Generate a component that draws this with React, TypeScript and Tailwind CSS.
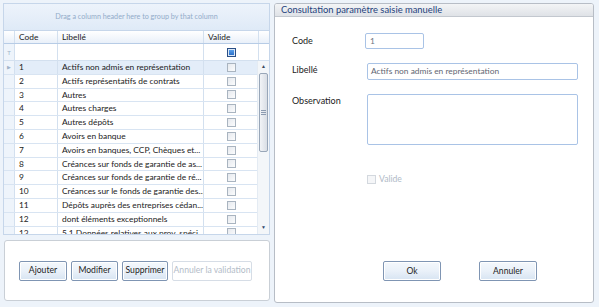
import React from 'react'

const rows = [
    ['1', 'Actifs non admis en représentation'],
    ['2', 'Actifs représentatifs de contrats'],
    ['3', 'Autres'],
    ['4', 'Autres charges'],
    ['5', 'Autres dépôts'],
    ['6', 'Avoirs en banque'],
    ['7', 'Avoirs en banques, CCP, Chèques et...'],
    ['8', 'Créances sur fonds de garantie de as...'],
    ['9', 'Créances sur fonds de garantie de ré...'],
    ['10', 'Créances sur le fonds de garantie des...'],
    ['11', 'Dépôts auprès des entreprises cédan...'],
    ['12', 'dont éléments exceptionnels'],
    ['13', '5.1 Données relatives aux prov. spéci...'],
]

function GridCheck() {
    return (
        <span className="block w-[9px] h-[9px] border border-[#a9b4c0] bg-gradient-to-br from-[#e6e9ee] to-[#fbfcfd]" />
    )
}

function Btn({ label, w, disabled = false }: { label: string; w: string; disabled?: boolean }) {
    return (
        <button
            className={`${w} h-[20px] rounded-[2px] border text-[8.6px] leading-none whitespace-nowrap ${disabled
                ? 'border-[#d6dde6] bg-white text-[#b3bcc8]'
                : 'border-[#7f95b3] bg-gradient-to-b from-[#f4f8fc] via-[#eaf1f9] to-[#d7e4f2] text-[#1d1d1d] shadow-[inset_0_0_0_1px_#ffffff]'
                }`}
        >
            {label}
        </button>
    )
}

export default function App() {
    return (
        <div
            className="w-[599px] h-[307px] flex gap-[4px] p-[3px] bg-[#edf3fa] text-[8.4px] text-[#1b1b1b]"
            style={{ fontFamily: 'Lato, "Open Sans", sans-serif' }}
        >
            <div className="w-[267px] flex flex-col gap-[5px]">
                {/* grid */}
                <div className="h-[232px] flex flex-col border border-[#c6d6ea] bg-white overflow-hidden">
                    <div className="h-[27px] shrink-0 flex items-center justify-center bg-gradient-to-b from-[#edf3fb] to-[#dfeaf7] border-b border-[#c6d6ea] text-[7.2px] text-[#93acc9]">
                        Drag a column header here to group by that column
                    </div>
                    <div className="h-[13px] shrink-0 flex bg-gradient-to-b from-white to-[#e9f0f9] border-b border-[#b7cce6]">
                        <div className="w-[11px] border-r border-[#d3e0ef]" />
                        <div className="w-[43px] border-r border-[#d3e0ef] pl-[4px] flex items-center">Code</div>
                        <div className="w-[146px] border-r border-[#d3e0ef] pl-[4px] flex items-center">Libellé</div>
                        <div className="w-[55px] border-r border-[#d3e0ef] pl-[4px] flex items-center">Valide</div>
                        <div className="flex-1" />
                    </div>
                    <div className="h-[17px] shrink-0 flex border-b border-[#d3e0ef]">
                        <div className="w-[11px] border-r border-[#d3e0ef] bg-[#eef4fb] flex items-center justify-center text-[6px] text-[#9fb2c8]">
                            T
                        </div>
                        <div className="w-[43px] border-r border-[#d3e0ef]" />
                        <div className="w-[146px] border-r border-[#d3e0ef]" />
                        <div className="w-[55px] border-r border-[#d3e0ef] flex items-center justify-center">
                            <span className="block w-[9px] h-[9px] border border-[#2a4f86] bg-[#dbe8f7] p-[1px]">
                                <span className="block w-full h-full bg-gradient-to-b from-[#5aa0ea] to-[#2a6fc9]" />
                            </span>
                        </div>
                        <div className="flex-1" />
                    </div>
                    <div className="flex-1 flex min-h-0">
                        <div className="flex-1 overflow-hidden">
                            {rows.map(([code, label], i) => (
                                <div
                                    key={code}
                                    className={`h-[13.8px] flex border-b border-[#d8e4f2] ${i === 0 ? 'bg-[#e3edf9]' : ''}`}
                                >
                                    <div className="w-[11px] shrink-0 border-r border-[#d3e0ef] bg-[#eef4fb] flex items-center justify-center text-[5px] text-[#9fb2c8]">
                                        {i === 0 ? '▶' : ''}
                                    </div>
                                    <div className="w-[43px] shrink-0 border-r border-[#d3e0ef] pl-[4px] flex items-center">{code}</div>
                                    <div className="w-[146px] shrink-0 border-r border-[#d3e0ef] pl-[4px] flex items-center whitespace-nowrap overflow-hidden">
                                        {label}
                                    </div>
                                    <div className="w-[55px] shrink-0 border-r border-[#d3e0ef] flex items-center justify-center">
                                        <GridCheck />
                                    </div>
                                </div>
                            ))}
                        </div>
                        {/* scrollbar */}
                        <div className="w-[12px] shrink-0 flex flex-col items-center bg-[#f3f6f9] border-l border-[#e4ebf3]">
                            <div className="h-[12px] flex items-center justify-center text-[5px] text-[#3b4a5c]">▲</div>
                            <div className="w-[9px] h-[79px] rounded-[2px] border border-[#98a6b8] bg-gradient-to-r from-[#f2f4f7] to-[#d9dee5] flex items-center justify-center">
                                <div className="w-[5px] flex flex-col gap-[1px]">
                                    <span className="h-px bg-[#8c9bb0]" />
                                    <span className="h-px bg-[#8c9bb0]" />
                                    <span className="h-px bg-[#8c9bb0]" />
                                </div>
                            </div>
                            <div className="flex-1" />
                            <div className="h-[12px] flex items-center justify-center text-[5px] text-[#2f4a6d]">▼</div>
                        </div>
                    </div>
                </div>
                {/* buttons */}
                <div className="ml-[1px] h-[61px] rounded-[3px] border border-[#c9cfd6] bg-white flex items-center gap-[4px] pl-[14px]">
                    <Btn label="Ajouter" w="w-[48px]" />
                    <Btn label="Modifier" w="w-[47px]" />
                    <Btn label="Supprimer" w="w-[46px]" />
                    <Btn label="Annuler la validation" w="w-[80px]" disabled />
                </div>
            </div>

            {/* form */}
            <div className="w-[320px] h-[300px] flex flex-col rounded-[3px] border border-[#b7bdc6] bg-white overflow-hidden">
                <div className="h-[13px] shrink-0 flex items-center pl-[6px] bg-gradient-to-b from-[#f3f4f6] to-[#dfe2e7] border-b border-[#c3c8cf] text-[#1e3f7c] text-[9.4px]">
                    Consultation paramètre saisie manuelle
                </div>
                <div className="relative flex-1 text-[9px]">
                    <div className="flex flex-col pl-[17px] pt-[16px]">
                        <div className="flex items-center h-[16px]">
                            <span className="w-[73px]">Code</span>
                            <div className="w-[59px] h-[16px] rounded-[2px] border border-[#a9c3e6] flex items-center pl-[4px] text-[#6d7480] text-[8.4px]">1</div>
                        </div>
                        <div className="flex items-start mt-[14px] h-[16px]">
                            <span className="w-[75px]">Libellé</span>
                            <div className="w-[211px] h-[17px] rounded-[2px] border border-[#a9c3e6] flex items-center pl-[3px] text-[#5f6672] text-[8.4px]">
                                Actifs non admis en représentation
                            </div>
                        </div>
                        <div className="flex items-start mt-[15px]">
                            <span className="w-[75px]">Observation</span>
                            <div className="w-[211px] h-[51px] rounded-[2px] border border-[#a9c3e6]" />
                        </div>
                        <div className="flex items-center mt-[28px] ml-[75px] gap-[3px] text-[#b0bac7] text-[8.6px]">
                            <span className="block w-[9px] h-[9px] border border-[#d3d8de] bg-[#f5f6f8]" />
                            Valide
                        </div>
                    </div>
                    <div className="absolute left-[108px] top-[244px] flex gap-[38px]">
                        <Btn label="Ok" w="w-[58px]" />
                        <Btn label="Annuler" w="w-[58px]" />
                    </div>
                </div>
            </div>
        </div>
    )
}
